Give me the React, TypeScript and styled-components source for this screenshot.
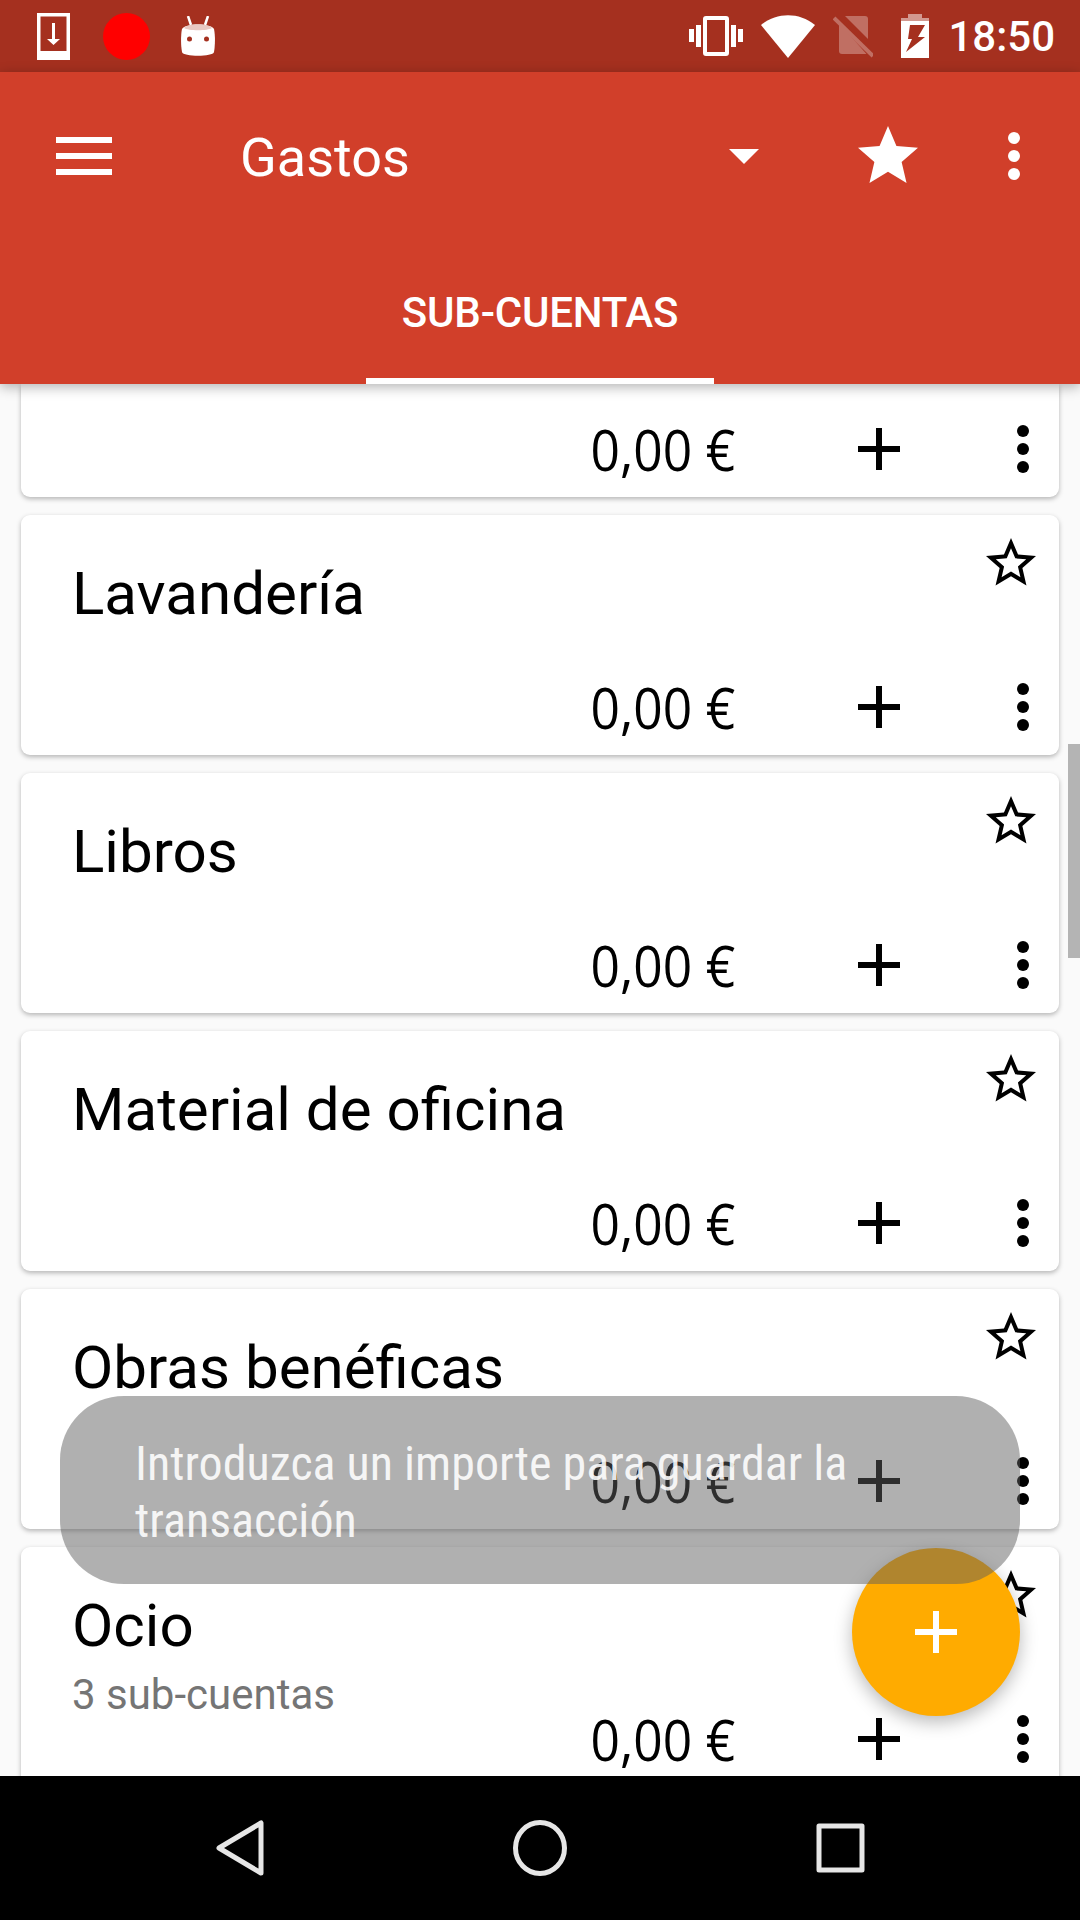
import React from "react";
import styled, { createGlobalStyle } from "styled-components";

const GlobalStyle = createGlobalStyle`
  html, body {
    margin: 0;
    padding: 0;
    background: #fafafa;
  }
`;

const STAR =
  "M12 17.27L18.18 21l-1.64-7.03L22 9.24l-7.19-.61L12 2 9.19 8.63 2 9.24l5.46 4.73L5.82 21z";
const STAR_OUTLINE =
  "M22 9.24l-7.19-.62L12 2 9.19 8.63 2 9.24l5.46 4.73L5.82 21 12 17.27 18.18 21l-1.63-7.03L22 9.24zM12 15.4l-3.76 2.27 1-4.28-3.32-2.88 4.38-.38L12 6.1l1.71 4.04 4.38.38-3.32 2.88 1 4.28L12 15.4z";

const accounts = [
  { name: "Lavandería" },
  { name: "Libros" },
  { name: "Material de oficina" },
  { name: "Obras benéficas" },
  { name: "Ocio", detail: "3 sub-cuentas" },
];

const DotsIcon: React.FC<{ color: string }> = ({ color }) => (
  <svg width="12" height="48" viewBox="0 0 12 48" fill={color}>
    <circle cx="6" cy="6" r="6" />
    <circle cx="6" cy="24" r="6" />
    <circle cx="6" cy="42" r="6" />
  </svg>
);

const PlusIcon: React.FC<{ color: string }> = ({ color }) => (
  <svg width="42" height="42" viewBox="0 0 42 42" fill={color}>
    <rect x="18" y="0" width="6" height="42" />
    <rect x="0" y="18" width="42" height="6" />
  </svg>
);

const AmountRow: React.FC = () => (
  <Footer>
    <Amount>0,00 €</Amount>
    <PlusSlot>
      <PlusIcon color="#000" />
    </PlusSlot>
    <DotsIcon color="#000" />
  </Footer>
);

const App: React.FC = () => (
  <Screen>
    <GlobalStyle />
    <StatusBar>
      <StatusGroup>
        <svg width="33" height="47" viewBox="0 0 33 47">
          <path fill="#fff" fillRule="evenodd" d="M0 0h33v47H0zM3.500 3.500V38h26V3.500z" />
          <path fill="#fff" d="M15 10h3v16h5l-6.500 6-6.500-6h5z" />
        </svg>
        <RedDot />
        <svg width="34" height="41" viewBox="0 0 34 41">
          <path stroke="#fff" strokeWidth="2.500" d="M7 0l3 9M27 0l-3 9" />
          <path fill="#fff" d="M1 13c3-6 29-6 32 0 1.500 7 1 18 0 23-1 5-31 5-32 0-1-5-1.500-16 0-23z" />
          <path fill="#e9c8c2" d="M3 12c4-5 24-5 28 0-4 3-24 3-28 0z" />
          <circle cx="8.500" cy="23" r="2.500" fill="#a5301f" />
          <circle cx="25.500" cy="23" r="2.500" fill="#a5301f" />
        </svg>
      </StatusGroup>
      <StatusGroup>
        <svg width="54" height="42" viewBox="0 0 54 42" fill="#fff">
          <rect x="0" y="14" width="5" height="13" />
          <rect x="7" y="10" width="5" height="22" />
          <path fillRule="evenodd" d="M14 4a3 3 0 0 1 3-3h20a3 3 0 0 1 3 3v34a3 3 0 0 1-3 3H17a3 3 0 0 1-3-3zM18 5v32h18V5z" />
          <rect x="42" y="10" width="5" height="22" />
          <rect x="49" y="14" width="5" height="13" />
        </svg>
        <WifiSlot>
          <svg width="54" height="43" viewBox="0 0 54 43" fill="#fff">
            <path d="M27 43L0 10C16-3 38-3 54 10z" />
          </svg>
        </WifiSlot>
        <SimSlot>
          <svg width="40" height="44" viewBox="0 0 40 44" fill="#fff" opacity=".3">
            <path d="M12 2h20a3 3 0 0 1 3 3v20z" />
            <path d="M6 9v28a3 3 0 0 0 3 3h24.500z" />
            <path stroke="#fff" strokeWidth="4" d="M1 4l39 38" />
          </svg>
        </SimSlot>
        <BatterySlot>
          <svg width="28" height="44" viewBox="0 0 28 44">
            <path fill="#fff" opacity=".5" d="M7 0h14v4H7zM0 4h28v3H0z" />
            <path fill="#fff" d="M0 7h28v37H0z" />
            <path fill="#a5301f" d="M9 11h15l-7 12h7L5 38l6-13H7z" />
          </svg>
        </BatterySlot>
        <Clock>18:50</Clock>
      </StatusGroup>
    </StatusBar>

    <Toolbar>
      <ActionRow>
        <MenuLines>
          <MenuLine />
          <MenuLine />
          <MenuLine />
        </MenuLines>
        <ToolbarTitle>Gastos</ToolbarTitle>
        <svg width="30" height="15" viewBox="0 0 30 15" fill="#fff">
          <path d="M0 0h30L15 15z" />
        </svg>
        <FavouriteSlot>
          <svg width="72" height="72" viewBox="0 0 24 24" fill="#fff">
            <path d={STAR} />
          </svg>
        </FavouriteSlot>
        <DotsIcon color="#fff" />
      </ActionRow>
      <TabRow>
        <Tab>SUB-CUENTAS</Tab>
      </TabRow>
    </Toolbar>

    <List>
      <PartialCard>
        <AmountRow />
      </PartialCard>
      {accounts.map((account) => (
        <Card key={account.name}>
          <CardTop>
            <CardText>
              <AccountName>{account.name}</AccountName>
              {account.detail && <AccountDetail>{account.detail}</AccountDetail>}
            </CardText>
            <svg width="60" height="60" viewBox="0 0 24 24" fill="#000">
              <path d={STAR_OUTLINE} />
            </svg>
          </CardTop>
          <AmountRow />
        </Card>
      ))}
    </List>

    <NavBar>
      <svg width="48" height="56" viewBox="0 0 48 56" fill="none" stroke="#e6e6e6" strokeWidth="5" strokeLinejoin="round">
        <path d="M45 3v50L3 28z" />
      </svg>
      <svg width="54" height="56" viewBox="0 0 54 56" fill="none" stroke="#e6e6e6" strokeWidth="5">
        <ellipse cx="27" cy="28" rx="24.500" ry="25.500" />
      </svg>
      <svg width="49" height="50" viewBox="0 0 49 50" fill="none" stroke="#e6e6e6" strokeWidth="5" strokeLinejoin="round">
        <rect x="3" y="3" width="43" height="44" />
      </svg>
    </NavBar>

    <ScrollThumb />
    <Fab>
      <PlusIcon color="#fff" />
    </Fab>
    <Toast>
      <ToastText>Introduzca un importe para guardar la transacción</ToastText>
    </Toast>
  </Screen>
);

const Screen = styled.div`
  position: relative;
  display: flex;
  flex-direction: column;
  width: 1080px;
  height: 1920px;
  overflow: hidden;
  background: #fafafa;
  font-family: Roboto, "Liberation Sans", sans-serif;
`;

const StatusBar = styled.div`
  display: flex;
  flex: none;
  align-items: center;
  justify-content: space-between;
  height: 72px;
  padding: 0 25px 0 37px;
  box-sizing: border-box;
  background: #a5301f;
`;

const StatusGroup = styled.div`
  display: flex;
  align-items: center;
  gap: 33px;
`;

const RedDot = styled.div`
  width: 47px;
  height: 47px;
  margin-right: -2px;
  border-radius: 50%;
  background: #ff0000;
`;

const WifiSlot = styled.div`
  display: flex;
  margin-left: -15px;
`;

const SimSlot = styled.div`
  display: flex;
  margin-left: -15px;
`;

const BatterySlot = styled.div`
  display: flex;
  margin-left: -5px;
`;

const Clock = styled.div`
  margin-left: -14px;
  color: #fff;
  font-size: 42px;
  font-weight: 500;
`;

const Toolbar = styled.div`
  position: relative;
  z-index: 2;
  flex: none;
  height: 312px;
  background: #d13f2a;
  box-shadow: 0 3px 12px rgba(0, 0, 0, 0.3);
`;

const ActionRow = styled.div`
  display: flex;
  align-items: center;
  height: 168px;
  padding: 0 60px 0 56px;
  box-sizing: border-box;
`;

const MenuLines = styled.div`
  display: flex;
  flex-direction: column;
  gap: 10px;
  width: 56px;
`;

const MenuLine = styled.div`
  height: 6px;
  background: #fff;
`;

const ToolbarTitle = styled.div`
  flex: 1;
  margin-left: 128px;
  padding-top: 2px;
  color: #fff;
  font-size: 54px;
`;

const FavouriteSlot = styled.div`
  display: flex;
  margin: 0 84px 0 93px;
`;

const TabRow = styled.div`
  display: flex;
  justify-content: center;
  height: 144px;
`;

const Tab = styled.div`
  display: flex;
  align-items: center;
  justify-content: center;
  width: 348px;
  padding-top: 7px;
  border-bottom: 6px solid #fff;
  box-sizing: border-box;
  color: #fff;
  font-size: 42px;
  font-weight: 500;
  letter-spacing: -0.2px;
`;

const List = styled.div`
  display: flex;
  flex: 1;
  flex-direction: column;
  gap: 18px;
  min-height: 0;
  padding: 0 21px;
  overflow: hidden;
`;

const Card = styled.div`
  display: flex;
  flex: none;
  flex-direction: column;
  justify-content: space-between;
  height: 240px;
  border-radius: 9px;
  background: #fff;
  box-shadow: 0 2px 5px rgba(0, 0, 0, 0.28);
`;

const PartialCard = styled(Card)`
  height: 113px;
  justify-content: flex-end;
  border-radius: 0 0 9px 9px;
`;

const CardTop = styled.div`
  display: flex;
  justify-content: space-between;
  height: 144px;
  padding: 18px 18px 0 51px;
  box-sizing: border-box;
`;

const CardText = styled.div`
  display: flex;
  flex-direction: column;
  padding-top: 29px;
`;

const AccountName = styled.div`
  color: #000;
  font-size: 60.1px;
  line-height: 64px;
`;

const AccountDetail = styled.div`
  margin-top: 12px;
  color: #757575;
  font-size: 42px;
  line-height: 50px;
`;

const Footer = styled.div`
  display: flex;
  flex: none;
  align-items: center;
  justify-content: flex-end;
  height: 96px;
  padding-right: 30px;
`;

const Amount = styled.div`
  color: #000;
  font-family: "Open Sans", "Noto Sans", sans-serif;
  font-size: 56px;
  transform: scaleX(0.92);
  transform-origin: right center;
`;

const PlusSlot = styled.div`
  display: flex;
  margin: 0 117px 0 123px;
`;

const NavBar = styled.div`
  position: relative;
  z-index: 2;
  display: flex;
  flex: none;
  align-items: center;
  height: 144px;
  padding-left: 216px;
  gap: 249px;
  box-sizing: border-box;
  background: #000;
`;

const ScrollThumb = styled.div`
  position: absolute;
  top: 744px;
  right: 0;
  width: 12px;
  height: 214px;
  background: #b4b4b4;
`;

const Fab = styled.div`
  position: absolute;
  top: 1548px;
  left: 852px;
  z-index: 3;
  display: flex;
  align-items: center;
  justify-content: center;
  width: 168px;
  height: 168px;
  border-radius: 50%;
  background: #ffab00;
  box-shadow: 0 6px 18px rgba(0, 0, 0, 0.28);
`;

const Toast = styled.div`
  position: absolute;
  top: 1396px;
  left: 60px;
  z-index: 4;
  width: 960px;
  height: 188px;
  padding: 39px 75px 0;
  box-sizing: border-box;
  border-radius: 64px;
  background: rgba(94, 94, 94, 0.49);
`;

const ToastText = styled.div`
  color: rgba(255, 255, 255, 0.88);
  font-size: 48px;
  font-stretch: 75%;
  line-height: 57px;
`;

export default App;
